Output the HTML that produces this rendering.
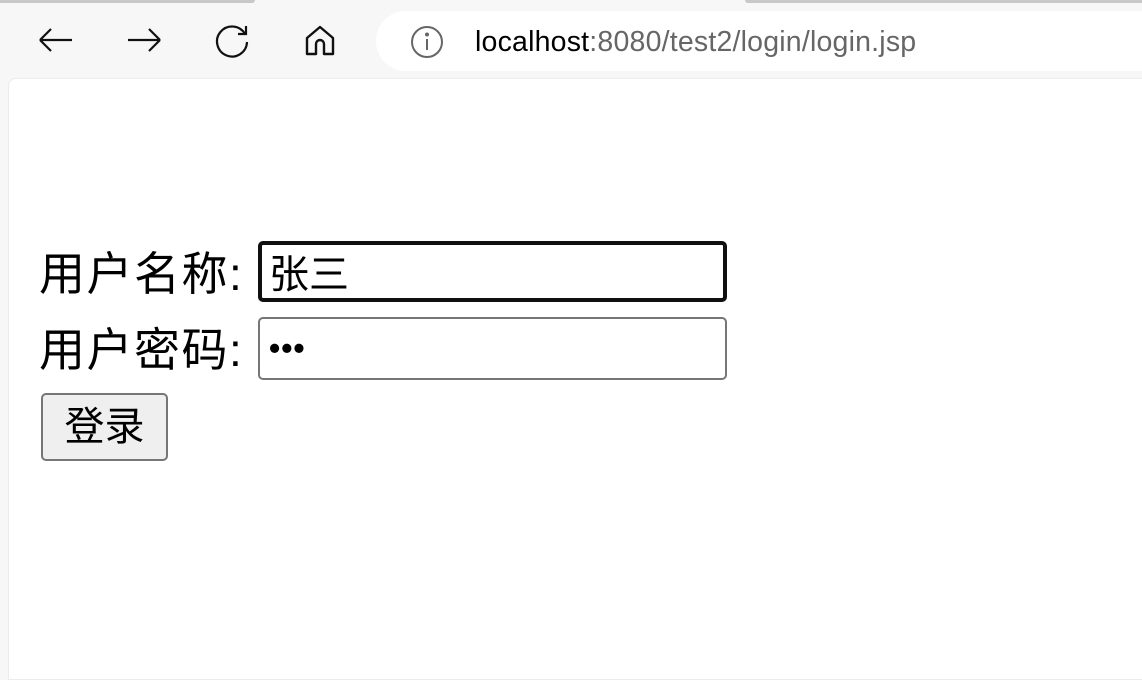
<!DOCTYPE html>
<html><head><meta charset="utf-8"><style>
body{margin:0;width:1142px;height:657px;background:#f7f7f7;position:relative;overflow:hidden;font-family:"Liberation Sans","Noto Sans CJK SC",sans-serif}
.tab1{position:absolute;left:0;top:0;width:255px;height:3px;background:#c8c8c8;border-radius:0 0 4px 0}
.tab2{position:absolute;left:745px;top:0;width:400px;height:3px;background:#c8c8c8;border-radius:0 0 0 4px}
.url{position:absolute;left:376px;top:11px;width:800px;height:60px;background:#fff;border-radius:30px}
.urltext{position:absolute;left:475px;top:25px;font-size:28.5px;color:#000;line-height:34px;letter-spacing:0.2px}
.urltext span{color:#666}
.page{position:absolute;left:8px;top:78px;width:1140px;height:600px;background:#fff;border-radius:8px 0 0 0;border:1px solid #ececec}
.lbl{position:absolute;left:39px;font-size:46px;line-height:52px;color:#000;letter-spacing:1.5px}
.in{position:absolute;left:258px;width:469px;box-sizing:border-box;background:#fff;border-radius:5px}
.btn{position:absolute;left:41px;top:393px;width:127px;height:68px;box-sizing:border-box;background:#efefef;border:2px solid #767676;border-radius:5px;font-size:40px;line-height:64px;text-align:center}
svg{position:absolute}
</style></head><body>
<div class="tab1"></div><div class="tab2"></div>
<svg style="left:36px;top:24px" width="40" height="36" viewBox="0 0 40 36" fill="none" stroke="#111" stroke-width="2.2"><path d="M4 16H36M4 16L15 5M4 16L15 27"/></svg>
<svg style="left:125px;top:24px" width="40" height="36" viewBox="0 0 40 36" fill="none" stroke="#111" stroke-width="2.2"><path d="M3 16H35M35 16L24 5M35 16L24 27"/></svg>
<svg style="left:212px;top:22px" width="40" height="40" viewBox="0 0 40 40" fill="none" stroke="#111" stroke-width="2.2"><path d="M33 12A15 15 0 1 0 35 20M34 4V12H26"/></svg>
<svg style="left:302px;top:24px" width="36" height="36" viewBox="0 0 36 36" fill="none" stroke="#111" stroke-width="2.4" stroke-linejoin="round"><path d="M5 14L18 3L31 14V30H22V20A4 4 0 0 0 14 20V30H5Z"/></svg>
<div class="url"></div>
<svg style="left:410px;top:25px" width="34" height="34" viewBox="0 0 34 34" fill="none" stroke="#666" stroke-width="2"><circle cx="17" cy="17" r="15"/><path d="M17 14V25"/><circle cx="17" cy="9.5" r="1" fill="#666"/></svg>
<div class="urltext">localhost<span>:8080/test2/login/login.jsp</span></div>
<div class="page"></div>
<div class="lbl" style="top:248px">用户名称:</div>
<div class="in" style="top:241px;height:61px;border:4px solid #101010;font-size:40px;line-height:60px;padding-left:7px">张三</div>
<div class="lbl" style="top:324px">用户密码:</div>
<div class="in" style="top:317px;height:63px;border:2px solid #767676;font-size:32px;line-height:58px;padding-left:9px;font-weight:bold;letter-spacing:1px">•••</div>
<div class="btn">登录</div>
</body></html>
